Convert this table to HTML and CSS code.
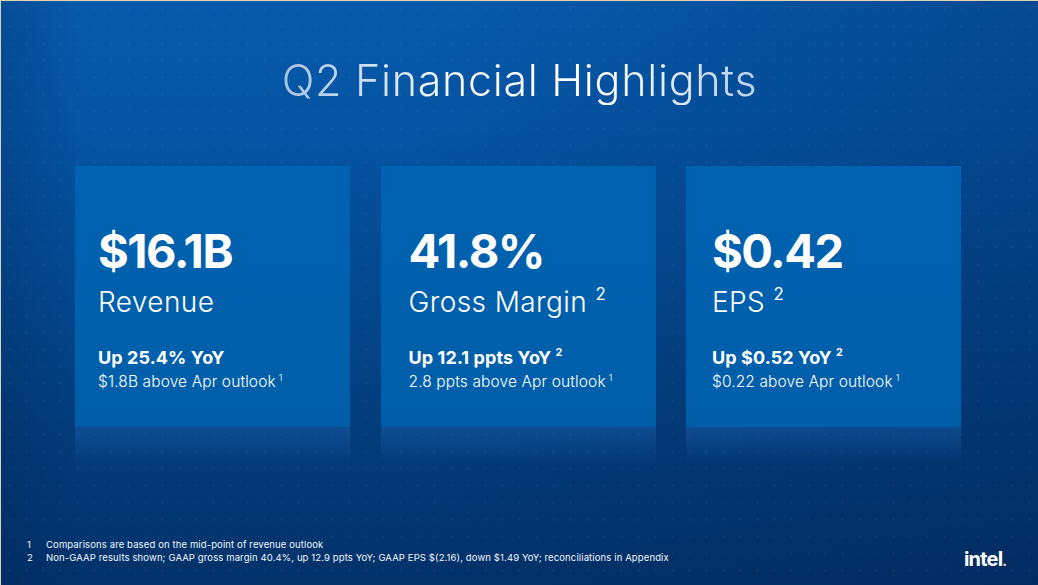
FILE: index.html
```html
<!DOCTYPE html>
<html lang="en">
<head>
<meta charset="utf-8">
<title>Q2 Financial Highlights</title>
<link rel="stylesheet" href="styles.css">
</head>
<body>
<div class="slide">
  <h1 class="title">Q2 Financial Highlights</h1>
  <div class="cards">
    <section class="card card-a">
      <div class="value">$16.1B</div>
      <div class="label">Revenue</div>
      <div class="change">Up 25.4% YoY</div>
      <div class="note">$1.8B above Apr outlook<sup>1</sup></div>
    </section>
    <section class="card card-b">
      <div class="value">41.8%</div>
      <div class="label">Gross Margin <sup>2</sup></div>
      <div class="change">Up 12.1 ppts YoY <sup>2</sup></div>
      <div class="note">2.8 ppts above Apr outlook<sup>1</sup></div>
    </section>
    <section class="card card-c">
      <div class="value">$0.42</div>
      <div class="label">EPS <sup>2</sup></div>
      <div class="change">Up $0.52 YoY <sup>2</sup></div>
      <div class="note">$0.22 above Apr outlook<sup>1</sup></div>
    </section>
  </div>
  <footer class="footer">
    <ol class="footnotes">
      <li><span class="num">1</span><span>Comparisons are based on the mid-point of revenue outlook</span></li>
      <li><span class="num">2</span><span>Non-GAAP results shown; GAAP gross margin 40.4%, up 12.9 ppts YoY; GAAP EPS $(2.16), down $1.49 YoY; reconciliations in Appendix</span></li>
    </ol>
    <div class="logo">intel<span class="dot">.</span></div>
  </footer>
</div>
</body>
</html>
```

FILE: styles.css
```css
* { box-sizing: border-box; }

html, body {
  margin: 0;
  padding: 0;
  background: #d9d4b4;
}

body {
  width: 1038px;
  height: 585px;
  overflow: hidden;
  font-family: Inter, "Noto Sans", sans-serif;
  padding: 1px 0 0 1px;
}

.slide {
  width: 1037px;
  height: 584px;
  display: flex;
  flex-direction: column;
  color: #fff;
  background-color: #03468c;
  background-image:
    radial-gradient(circle, rgba(120, 180, 255, 0.05) 1px, transparent 1.6px),
    linear-gradient(90deg, rgba(0, 25, 70, 0.2) 0%, rgba(0, 25, 70, 0) 8%, rgba(0, 25, 70, 0) 40%, rgba(0, 25, 70, 0.24) 100%),
    linear-gradient(180deg, #075aab 0%, #0554a3 22%, #044a92 45%, #033c7a 75%, #02316a 100%);
  background-size: 17px 17px, 100% 100%, 100% 100%;
}

.title {
  margin: 54px 0 0;
  text-align: center;
  font-weight: 300;
  font-size: 43px;
  line-height: 50px;
  letter-spacing: 0.7px;
  color: #e6eef8;
  background: linear-gradient(90deg, #a9c3e3 0%, #f4f8fc 35%, #ffffff 65%, #bcd0e8 100%);
  -webkit-background-clip: text;
  background-clip: text;
  -webkit-text-fill-color: transparent;
  align-self: center;
}

.cards {
  display: flex;
  gap: 30.5px;
  margin: 61px 0 0 74px;
}

.card {
  position: relative;
  width: 275px;
  height: 261px;
  padding: 61px 0 0 23px;
  background: linear-gradient(180deg, #0062b0 0%, #005ea9 100%);
}

.card-b { padding-left: 28px; }
.card-c { padding-left: 26px; }

.card::after {
  content: "";
  position: absolute;
  left: 0;
  right: 0;
  top: 100%;
  height: 38px;
  background: linear-gradient(180deg, rgba(40, 120, 210, 0.28) 0%, rgba(40, 120, 210, 0) 100%);
}

.value {
  font-weight: 700;
  font-size: 47px;
  line-height: 47px;
  letter-spacing: -1.5px;
}

.label {
  margin-top: 14px;
  font-weight: 300;
  font-size: 28px;
  line-height: 28px;
  letter-spacing: 0.4px;
}

.label sup, .change sup {
  font-size: 0.6em;
  vertical-align: 0.7em;
  line-height: 0;
  font-weight: 400;
}

.change sup { font-weight: 700; }

.change {
  margin-top: 33px;
  font-weight: 700;
  font-size: 18px;
  line-height: 18px;
  letter-spacing: 0.1px;
}

.note {
  margin-top: 7px;
  font-weight: 300;
  font-size: 15.5px;
  line-height: 16px;
  letter-spacing: 0.12px;
}

.note sup {
  font-size: 0.6em;
  vertical-align: 0.7em;
  line-height: 0;
  margin-left: 3px;
}

.footer {
  margin-top: auto;
  display: flex;
  align-items: flex-end;
  justify-content: space-between;
  padding: 0 31px 14px 26px;
}

.footnotes {
  list-style: none;
  margin: 0 0 7px;
  padding: 0;
  font-size: 9.5px;
  line-height: 13px;
  letter-spacing: 0.12px;
  color: #f2f6fb;
}

.footnotes li {
  display: flex;
}

.footnotes .num {
  width: 19px;
  flex: none;
}

.logo {
  font-weight: 700;
  font-size: 20px;
  line-height: 20px;
  letter-spacing: -0.8px;
}

.logo .dot {
  font-size: 14px;
  letter-spacing: 0;
}
```
